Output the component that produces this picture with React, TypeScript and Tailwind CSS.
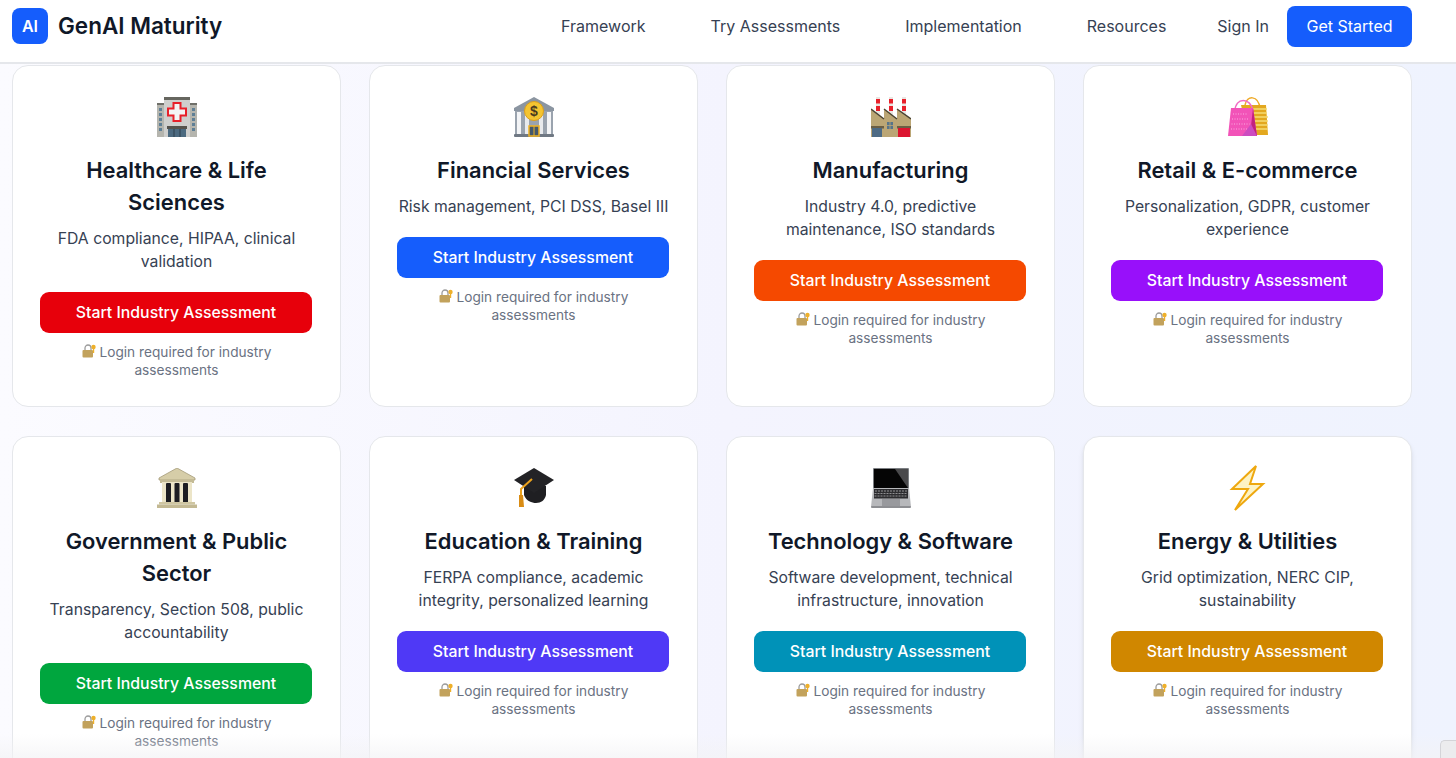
const FONT = "font-['Inter','Liberation_Sans',sans-serif]";

const HospitalIcon = () => (
  <svg width="40" height="40" viewBox="0 0 40 40">
    <rect x="0" y="8" width="40" height="32" fill="#a9a9a4" />
    <rect x="0" y="6" width="40" height="2.5" fill="#6f6f69" />
    <rect x="7" y="1" width="26" height="39" fill="#cfcfcd" />
    <rect x="7" y="0" width="26" height="3" fill="#66665f" />
    <rect x="0" y="8" width="7" height="32" fill="#b5b5ae" />
    <rect x="33" y="8" width="7" height="32" fill="#b5b5ae" />
    <path d="M16.5 6h7v5.500H29v7h-5.500v5.500h-7v-5.500H11v-7h5.500z" fill="#f4f4f4" stroke="#e8202a" strokeWidth="2" />
    {[11, 16, 21, 26, 31].map((y) => (
      <g key={y}>
        <rect x="2" y={y} width="3" height="3" fill="#5f7f96" />
        <rect x="35" y={y} width="3" height="3" fill="#5f7f96" />
      </g>
    ))}
    <rect x="10" y="29" width="20" height="3" fill="#56534d" />
    <rect x="11" y="32" width="18" height="8" fill="#4c6a80" />
    <path d="M17 32v8M23 32v8" stroke="#2d3f4d" strokeWidth="1" />
  </svg>
);

const BankIcon = () => (
  <svg width="40" height="40" viewBox="0 0 40 40">
    <path d="M20 0L40 11v3H0v-3z" fill="#8b95a1" />
    <rect x="1" y="14" width="38" height="24" fill="#9aa3ae" />
    <rect x="3" y="15" width="4" height="23" fill="#f3f4f6" />
    <rect x="11" y="15" width="4" height="23" fill="#e8eaed" />
    <rect x="25" y="15" width="4" height="23" fill="#e8eaed" />
    <rect x="33" y="15" width="4" height="23" fill="#f3f4f6" />
    <rect x="0" y="37" width="40" height="3" rx="1" fill="#6f7883" />
    <rect x="15" y="29" width="10" height="10" fill="#44586b" stroke="#f0b323" strokeWidth="1.500" />
    <path d="M20 29v10" stroke="#f0b323" strokeWidth="1" />
    <circle cx="20" cy="14" r="9.500" fill="#f4c430" stroke="#dc9f1a" />
    <text x="20" y="19" fontSize="14" fontWeight="700" textAnchor="middle" fill="#4a3a20" fontFamily="Liberation Sans">$</text>
  </svg>
);

const FactoryIcon = () => (
  <svg width="40" height="40" viewBox="0 0 40 40">
    {[7, 20, 33].map((x) => (
      <g key={x}>
        <rect x={x - 2} y="0" width="4" height="18" fill="#e9e6e2" />
        <rect x={x - 2} y="2" width="4" height="4.500" fill="#e8202a" />
        <rect x={x - 2} y="9" width="4" height="5" fill="#e8202a" />
      </g>
    ))}
    <path d="M0 12L13 22V12l13 10V12l14 10v18H0z" fill="#bba675" />
    <path d="M0 12L13 22M13 12L26 22M26 12L40 22" stroke="#4b4434" strokeWidth="1.500" />
    <rect x="0" y="29" width="13" height="2.500" fill="#6b5f45" />
    <rect x="1" y="31" width="10" height="9" fill="#4d6a84" />
    <rect x="26" y="29" width="14" height="2.500" fill="#6b5f45" />
    <rect x="27" y="31" width="12" height="9" fill="#dc1530" />
    <rect x="16" y="25" width="6" height="7" fill="#56748a" />
    <path d="M19 25v7M16 28.500h6" stroke="#bba675" strokeWidth="0.800" />
  </svg>
);

const BagsIcon = () => (
  <svg width="40" height="40" viewBox="0 0 40 40">
    <path d="M17 8c2-10 13-10 15 3" fill="none" stroke="#eeaa28" strokeWidth="1.500" />
    <path d="M13 8h25l2 30H20z" fill="#e3a81f" />
    <path d="M22 12h17M22 16h17M22 20h18M22 24h18M22 28h18M22 32h18" stroke="#f6dc74" strokeWidth="1.300" />
    <path d="M7 14C7 0 23 0 25 14" fill="none" stroke="#f06ac4" strokeWidth="1.500" />
    <path d="M3 11h22l4 28H0z" fill="#f253b8" />
    <path d="M5 17h15M4 22h17M3.500 27h18M3 32h17" stroke="#fbb5e4" strokeWidth="0.900" strokeDasharray="1 1.500" />
    <path d="M25 11l4 28-7-1z" fill="#c2227f" />
    <path d="M14 39l9-12 6 12z" fill="#cc4cc0" />
  </svg>
);

const CapitolIcon = () => (
  <svg width="40" height="40" viewBox="0 0 40 40">
    <path d="M20 0L38 10v2H2v-2z" fill="#d6cda8" stroke="#a49b78" strokeWidth="0.800" />
    <rect x="3" y="11" width="34" height="4" fill="#c4bb96" />
    <rect x="5" y="14" width="30" height="21" fill="#ece5c8" />
    <rect x="9" y="15" width="5" height="20" rx="1" fill="#1d1d22" />
    <rect x="17.500" y="15" width="5" height="20" rx="1" fill="#1d1d22" />
    <rect x="26" y="15" width="5" height="20" rx="1" fill="#1d1d22" />
    <rect x="2" y="34" width="36" height="2.500" fill="#cfc6a2" />
    <rect x="0" y="36.500" width="40" height="3.500" fill="#c3b993" />
  </svg>
);

const CapIcon = () => (
  <svg width="40" height="40" viewBox="0 0 40 40">
    <path d="M10 18v9c2 6 8 8 12 8 5 0 9-3 10-8V18z" fill="#1f1f22" />
    <path d="M20 0L40 12 20 25 0 12z" fill="#232326" />
    <path d="M18 11L7 21v8" fill="none" stroke="#eba21d" strokeWidth="2" />
    <path d="M5 27h4l1 12H5z" fill="#d98c14" />
  </svg>
);

const LaptopIcon = () => (
  <svg width="40" height="40" viewBox="0 0 40 40">
    <rect x="2" y="0" width="36" height="20.500" rx="1" fill="#7c7f83" />
    <rect x="3" y="1" width="34" height="19" fill="#050505" />
    <path d="M24 1h13v19z" fill="#4a4a4c" />
    <path d="M2 20h36l2 19H0z" fill="#b7b8bb" />
    <rect x="3" y="21" width="34" height="9.500" fill="#2d2d30" />
    <path d="M4 23h32M3.500 25.500h33M3.500 28h33" stroke="#a9aaac" strokeWidth="0.800" strokeDasharray="2 1" />
    <rect x="11" y="31" width="18" height="7" fill="#98999d" />
    <rect x="0" y="38" width="40" height="2" rx="1" fill="#8d8e92" />
  </svg>
);

const BoltIcon = () => (
  <svg width="40" height="40" viewBox="0 0 40 40" className="overflow-visible">
    <path d="M28-2L4 21H20L7 42 35 16H22z" fill="#fdf3c4" stroke="#eea80f" strokeWidth="2" />
  </svg>
);

const LockIcon = () => (
  <svg width="14" height="14" viewBox="0 0 14 14" className="inline-block align-[-1px]">
    <path d="M3 6V4a3 3 0 016 0v2" fill="none" stroke="#9c9c9c" strokeWidth="1.300" />
    <rect x="0.500" y="6" width="10.500" height="7.500" rx="1" fill="#c2a25c" />
    <circle cx="11.500" cy="3" r="2.200" fill="#eeb02a" />
    <rect x="10.900" y="4" width="1.300" height="5" fill="#eeb02a" />
  </svg>
);

type Industry = {
  name: string;
  desc: string;
  btn: string;
  icon: React.ReactNode;
  lifted?: boolean;
};

const industries: Industry[] = [
  { name: "Healthcare & Life Sciences", desc: "FDA compliance, HIPAA, clinical validation", btn: "bg-[#e7000b]", icon: <HospitalIcon /> },
  { name: "Financial Services", desc: "Risk management, PCI DSS, Basel III", btn: "bg-[#155dfc]", icon: <BankIcon /> },
  { name: "Manufacturing", desc: "Industry 4.0, predictive maintenance, ISO standards", btn: "bg-[#f54900]", icon: <FactoryIcon /> },
  { name: "Retail & E-commerce", desc: "Personalization, GDPR, customer experience", btn: "bg-[#9810fa]", icon: <BagsIcon /> },
  { name: "Government & Public Sector", desc: "Transparency, Section 508, public accountability", btn: "bg-[#00a63e]", icon: <CapitolIcon /> },
  { name: "Education & Training", desc: "FERPA compliance, academic integrity, personalized learning", btn: "bg-[#4f39f6]", icon: <CapIcon /> },
  { name: "Technology & Software", desc: "Software development, technical infrastructure, innovation", btn: "bg-[#0092b8]", icon: <LaptopIcon /> },
  { name: "Energy & Utilities", desc: "Grid optimization, NERC CIP, sustainability", btn: "bg-[#d08700]", icon: <BoltIcon />, lifted: true },
];

const IndustryCard = ({ item }: { item: Industry }) => (
  <div className={`flex h-[342px] flex-col items-center rounded-2xl border border-[#e5e7eb] bg-white px-[28px] pt-[31px] text-center ${item.lifted ? "shadow-md" : ""}`}>
    <div className="h-[40px] w-[40px]">{item.icon}</div>
    <h3 className="mt-[17px] text-[21.900px] leading-[32px] font-semibold text-[#101828]">{item.name}</h3>
    <p className="mt-[9px] text-[15.750px] leading-[23px] text-[#364153]">{item.desc}</p>
    <button className={`mt-[19px] -ml-px h-[41px] w-[272px] shrink-0 self-start rounded-[9px] text-[15.850px] font-medium text-white ${item.btn}`}>
      Start Industry Assessment
    </button>
    <p className="mt-[10px] px-4 text-[13.700px] leading-[18px] text-[#6a7282]">
      <LockIcon /> Login required for industry assessments
    </p>
  </div>
);

export default function App() {
  return (
    <div className={`relative flex h-[758px] flex-col overflow-hidden bg-gradient-to-r from-[#fbfbff] via-[#f4f4fe] to-[#eff3fe] ${FONT}`}>
      <header className="z-10 flex h-[64px] shrink-0 items-center justify-between border-b-2 border-[#e5e7eb] bg-white pr-[44px] pb-[10px] pl-[12px]">
        <div className="flex items-center gap-[10px]">
          <div className="flex h-[36px] w-[36px] items-center justify-center rounded-[8px] bg-[#155dfc] text-[16px] font-semibold text-white">AI</div>
          <span className="text-[22.500px] font-semibold text-[#101828]">GenAI Maturity</span>
        </div>
        <nav className="flex items-center text-[16px] text-[#364153]">
          <a className="mr-[65px]">Framework</a>
          <a className="mr-[65px]">Try Assessments</a>
          <a className="mr-[65px]">Implementation</a>
          <a className="mr-[51px]">Resources</a>
          <a className="mr-[18px]">Sign In</a>
          <button className="h-[41px] w-[125px] rounded-[8px] bg-[#155dfc] text-white">Get Started</button>
        </nav>
      </header>
      <main className="grid grid-cols-[329px_329px_329px_329px] gap-x-[28px] gap-y-[29px] pt-[1px] pl-[12px]">
        {industries.map((item) => (
          <IndustryCard key={item.name} item={item} />
        ))}
      </main>
      {/* fade along the bottom edge and the corner widget */}
      <div className="absolute right-0 bottom-0 left-0 h-[24px] bg-gradient-to-b from-transparent to-[#f3f3f5]/70"></div>
      <div className="absolute right-0 bottom-0 h-[18px] w-[16px] rounded-tl-[5px] border-t border-l border-[#d4d4d8] bg-[#ececee]"></div>
    </div>
  );
}
